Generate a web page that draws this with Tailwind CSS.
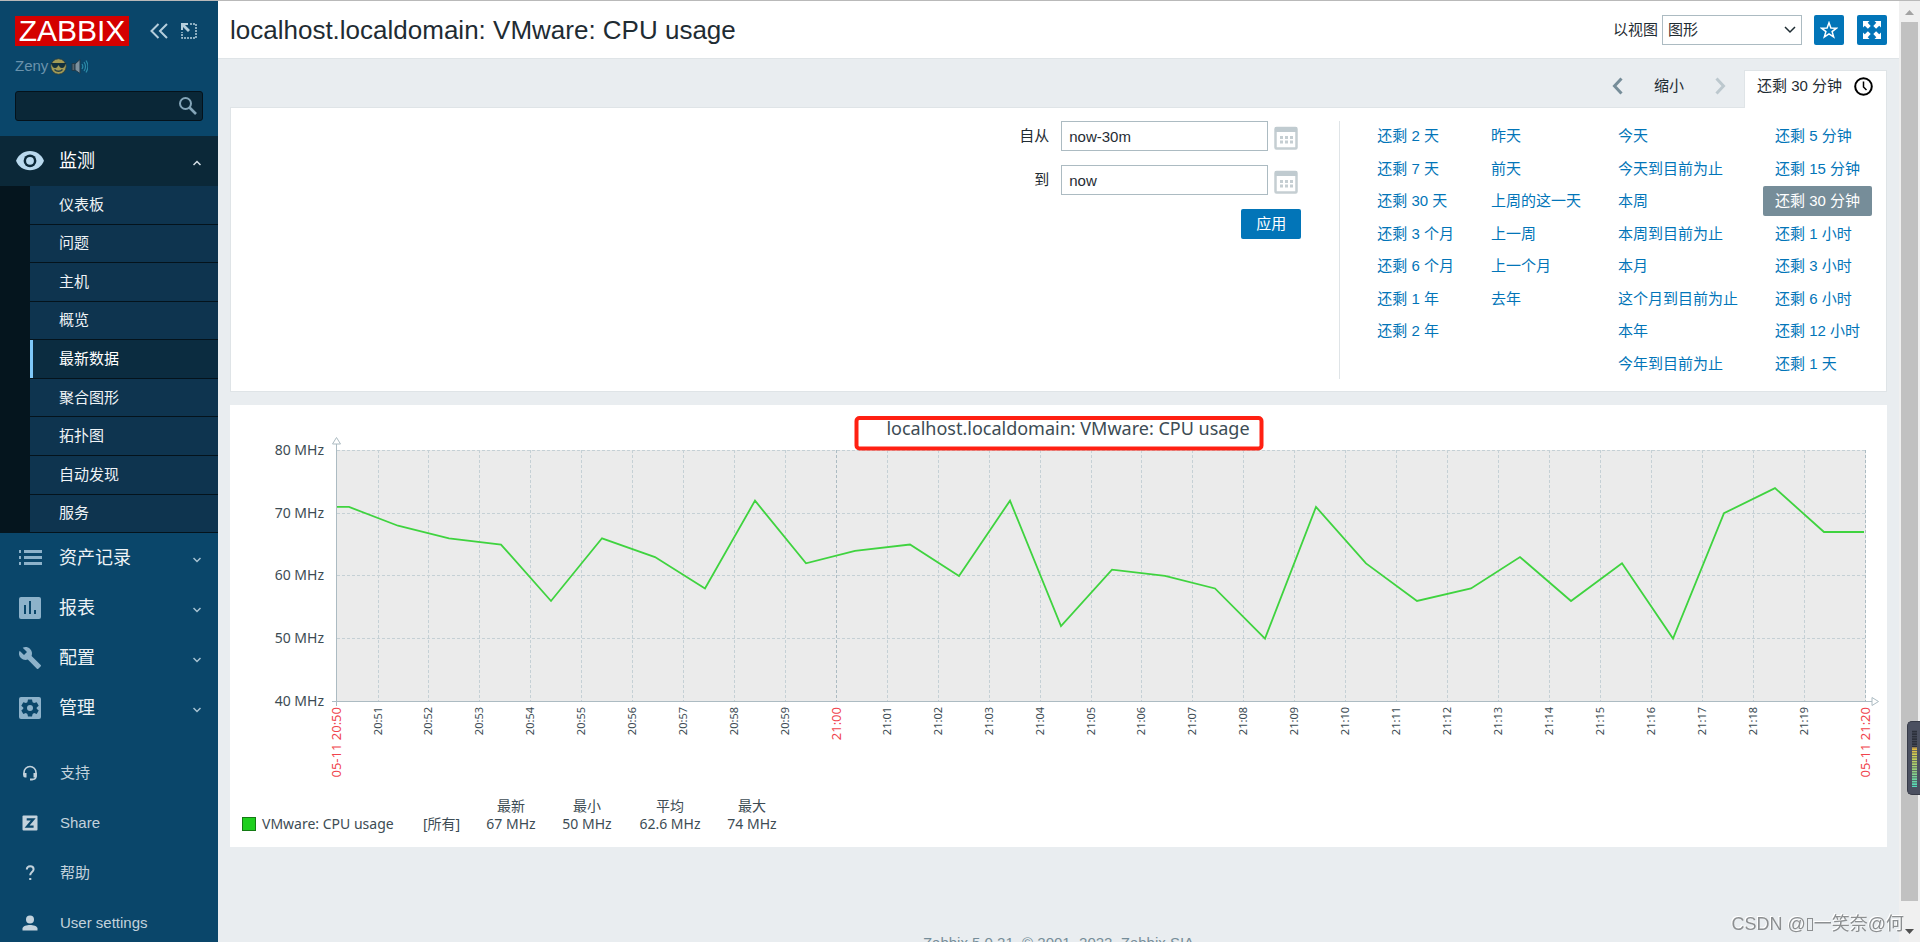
<!DOCTYPE html>
<html lang="zh-CN">
<head>
<meta charset="utf-8">
<title>localhost.localdomain: VMware: CPU usage</title>
<script src="https://cdn.jsdelivr.net/npm/@tailwindcss/browser@4"></script>
</head>
<body class="flex h-screen overflow-hidden border-t border-[#b9b9b9] bg-[#e9edf0] font-['Liberation_Sans','Noto_Sans_CJK_SC',sans-serif] text-[15px] leading-[18px] text-[#1f2c33]">

<aside class="flex w-[218px] shrink-0 flex-col overflow-hidden bg-[#0a466a]">
  <div class="flex h-[135px] shrink-0 flex-col px-[15px] pt-[15px]">
    <div class="flex items-center">
      <a href="#" class="flex h-[30px] w-[114px] items-center justify-center bg-[#d40000] text-[30px] leading-[30px] text-white">ZABBIX</a>
      <button aria-label="折叠侧栏" class="ml-5 text-[#b5cedc]"><svg class="size-5" viewBox="0 0 20 20" fill="none" stroke="currentColor" stroke-width="2"><path d="M9.500 3 2.500 10l7 7M18 3l-7 7 7 7"/></svg></button>
      <button aria-label="隐藏侧栏" class="ml-3 text-[#b5cedc]"><svg class="size-4" viewBox="0 0 16 16" fill="none" stroke="currentColor"><path stroke-width="1.500" stroke-dasharray="2 1" d="M9 1h6v14H1V9"/><path d="M0 0h7v2H4l5 5-2 2-5-5v3H0z" fill="currentColor" stroke="none"/></svg></button>
    </div>
    <div class="mt-[11px] flex items-center text-[#6a93ad]">Zeny
      <svg class="ml-0.5 size-[17px]" viewBox="0 0 17 17"><circle cx="8.500" cy="8.500" r="7.800" fill="#a39b55" stroke="#243f47"/><path d="M1 5h15v1l-1 .5c0 2-1 3.500-3 3.500S9.500 9 9 7.500H8C7.500 9 7 10 5 10S2 8.500 2 6.500L1 6z" fill="#12303d"/><path d="M4.500 11.500c2 2.300 6 2.300 8 0" fill="none" stroke="#243f47" stroke-width="1.300"/></svg>
      <svg class="ml-1 size-[17px]" viewBox="0 0 17 17"><path d="M1 5.500h3v7H1z" fill="#56636b" stroke="#203b4a"/><path d="M4 6l5-4.500v14L4 12z" fill="#7e929f" stroke="#203b4a"/><path d="M11 6c1 1.500 1 3.500 0 5M13 4c2 2.500 2 6.500 0 9M15 2.500c2.200 3.500 2.200 8.500 0 12" fill="none" stroke="#2c8ba8" stroke-width="1.200"/></svg>
    </div>
    <div class="mt-4 flex h-[30px] items-center rounded-[3px] border border-[#04121b] bg-[#0a2737] pr-[5px]">
      <input type="search" aria-label="搜索" class="min-w-0 flex-1 bg-transparent px-2 text-white outline-none">
      <button aria-label="搜索"><svg class="size-[18px]" viewBox="0 0 18 18" fill="none" stroke="#84a5b8"><circle cx="6.500" cy="6.500" r="5.500" stroke-width="2"/><path d="m10.500 10.500 6.500 6.500" stroke-width="2.600"/></svg></button>
    </div>
  </div>

  <nav class="shrink-0 text-[#eef3f6]">
    <a href="#" class="flex h-[50px] items-center bg-[#0b2838] pr-[17px] pl-4 text-lg text-white">
      <svg class="h-5 w-7" viewBox="0 0 28 20"><path d="M14 0C7.500 0 2.200 4 0 9.800c2.200 5.700 7.500 9.500 14 9.500s11.800-3.800 14-9.500C25.800 4 20.500 0 14 0z" fill="#b9d9ee"/><circle cx="14" cy="9.800" r="6.400" fill="#0b2838"/><circle cx="14" cy="9.800" r="3.900" fill="#b9d9ee"/></svg>
      <span class="ml-[15px] flex-1">监测</span>
      <svg class="mt-1 h-[6px] w-2" viewBox="0 0 8 6" fill="none" stroke="#d5dfe6" stroke-width="1.500"><path d="M.5 5 4 1.500 7.500 5"/></svg>
    </a>
    <ul class="flex h-[347px] flex-col bg-[#05151e] pl-[30px] [&>li]:flex [&>li]:flex-1 [&>li]:border-b [&>li]:border-[#04131c] [&_a]:flex [&_a]:flex-1 [&_a]:items-center [&_a]:pl-[29px]">
      <li class="bg-[#0e344f]"><a href="#">仪表板</a></li>
      <li class="bg-[#0e344f]"><a href="#">问题</a></li>
      <li class="bg-[#0e344f]"><a href="#">主机</a></li>
      <li class="bg-[#0e344f]"><a href="#">概览</a></li>
      <li class="bg-[#0b2c40]"><a href="#" class="border-l-3 border-[#7fc8f8] !pl-[26px] text-white">最新数据</a></li>
      <li class="bg-[#0e344f]"><a href="#">聚合图形</a></li>
      <li class="bg-[#0e344f]"><a href="#">拓扑图</a></li>
      <li class="bg-[#0e344f]"><a href="#">自动发现</a></li>
      <li class="bg-[#0e344f]"><a href="#">服务</a></li>
    </ul>
    <a href="#" class="flex h-[50px] items-center pr-[17px] pl-[18px] text-lg">
      <svg class="size-6" viewBox="0 0 24 24" fill="#8db2ca"><path d="M1 4h2v3H1zM1 10h2v3H1zM1 16h2v3H1zM6 4h18v3H6zM6 10h18v3H6zM6 16h18v3H6z"/></svg>
      <span class="ml-[17px] flex-1">资产记录</span>
      <svg class="mt-1 h-[6px] w-2" viewBox="0 0 8 6" fill="none" stroke="#a9c3d3" stroke-width="1.500"><path d="M.5 1 4 4.500 7.500 1"/></svg>
    </a>
    <a href="#" class="flex h-[50px] items-center pr-[17px] pl-[18px] text-lg">
      <svg class="size-6" viewBox="0 0 24 24"><rect x="1" y="1" width="22" height="22" rx="2" fill="#8db2ca"/><path d="M6 9h2v9H6zM11 5h2v13h-2zM16 14h2v4h-2z" fill="#0a466a"/></svg>
      <span class="ml-[17px] flex-1">报表</span>
      <svg class="mt-1 h-[6px] w-2" viewBox="0 0 8 6" fill="none" stroke="#a9c3d3" stroke-width="1.500"><path d="M.5 1 4 4.500 7.500 1"/></svg>
    </a>
    <a href="#" class="flex h-[50px] items-center pr-[17px] pl-[18px] text-lg">
      <svg class="size-6" viewBox="0 0 24 24"><path fill="#8db2ca" d="m22.700 19-9.100-9.100c.9-2.300.4-5-1.500-6.900-2-2-5-2.400-7.400-1.300L9 6 6 9 1.600 4.700C.4 7.100.9 10.100 2.900 12.100c1.900 1.900 4.600 2.400 6.900 1.500l9.100 9.100c.4.4 1 .4 1.400 0l2.300-2.300c.5-.4.5-1.100.1-1.400z"/></svg>
      <span class="ml-[17px] flex-1">配置</span>
      <svg class="mt-1 h-[6px] w-2" viewBox="0 0 8 6" fill="none" stroke="#a9c3d3" stroke-width="1.500"><path d="M.5 1 4 4.500 7.500 1"/></svg>
    </a>
    <a href="#" class="flex h-[50px] items-center pr-[17px] pl-[18px] text-lg">
      <svg class="size-6" viewBox="0 0 24 24"><rect x="1" y="1" width="22" height="22" rx="2" fill="#8db2ca"/><path d="M10 3.500h4l.6 2.700 1.500.9 2.600-.9 2 3.500-2 1.800v1.200l2 1.800-2 3.500-2.600-.9-1.500.9-.6 2.500h-4l-.6-2.500-1.500-.9-2.600.9-2-3.500 2-1.800v-1.200l-2-1.800 2-3.500 2.600.9 1.500-.9z" fill="#0a466a"/><circle cx="12" cy="12" r="3" fill="#8db2ca"/></svg>
      <span class="ml-[17px] flex-1">管理</span>
      <svg class="mt-1 h-[6px] w-2" viewBox="0 0 8 6" fill="none" stroke="#a9c3d3" stroke-width="1.500"><path d="M.5 1 4 4.500 7.500 1"/></svg>
    </a>
  </nav>

  <nav class="mt-[15px] shrink-0 text-[#c3d2dc]">
    <a href="#" class="flex h-[50px] items-center pl-[22px]">
      <svg class="size-4" viewBox="0 0 16 16" fill="none" stroke="currentColor"><path d="M2 10V7.500a6 6 0 0 1 12 0V11c0 2.500-1.500 3.500-4 3.500" stroke-width="1.600"/><path d="M1.200 8h3.300v4.500H3a1.800 1.800 0 0 1-1.800-1.800zM11.500 8h3.300v3a1.800 1.800 0 0 1-1.800 1.500h-1.500zM8 13.500h2.500v2H8z" fill="currentColor" stroke="none"/></svg>
      <span class="ml-[22px]">支持</span>
    </a>
    <a href="#" class="flex h-[50px] items-center pl-[22px]">
      <svg class="size-4" viewBox="0 0 16 16"><rect x=".5" y=".5" width="15" height="15" rx="1" fill="currentColor"/><path d="M4.700 4.300h6.600L5 11.700h6.600" fill="none" stroke="#0a466a" stroke-width="2.200"/></svg>
      <span class="ml-[22px]">Share</span>
    </a>
    <a href="#" class="flex h-[50px] items-center pl-[22px]">
      <svg class="size-4" viewBox="0 0 16 16" fill="none" stroke="currentColor" stroke-width="2"><path d="M4.800 4.500C4.800 2.500 6 1.200 8.200 1.200s3.400 1.200 3.400 3c0 2.800-3.400 3-3.400 6M7.200 14h2.100"/></svg>
      <span class="ml-[22px]">帮助</span>
    </a>
    <a href="#" class="flex h-[50px] items-center pl-[22px]">
      <svg class="size-4" viewBox="0 0 16 16" fill="currentColor"><circle cx="8" cy="4.500" r="4"/><path d="M.5 15.500v-2c0-2.500 4.500-3.500 7.500-3.500s7.500 1 7.500 3.500v2z"/></svg>
      <span class="ml-[22px]">User settings</span>
    </a>
  </nav>
</aside>

<main class="flex min-w-0 flex-1 flex-col overflow-hidden">
  <header class="flex h-[58px] shrink-0 items-center border-b border-[#dfe4e7] bg-white px-3">
    <h1 class="flex-1 text-[26px] leading-8">localhost.localdomain: VMware: CPU usage</h1>
    <label for="view">以视图</label>
    <div class="relative ml-1">
      <select id="view" class="h-[30px] w-[140px] appearance-none border border-[#acbbc2] bg-white pl-[5px]"><option>图形</option></select>
      <svg class="pointer-events-none absolute top-[11px] right-[6px] h-2 w-3" viewBox="0 0 12 8" fill="none" stroke="#1f2c33" stroke-width="1.500"><path d="m1 1 5 5 5-5"/></svg>
    </div>
    <button aria-label="收藏" class="ml-3 flex size-[30px] items-center justify-center rounded-[2px] bg-[#0275b8]"><svg class="size-[18px]" viewBox="0 0 18 18" fill="none" stroke="#fff" stroke-width="1.500"><path d="m9 1.800 1.900 5.200 5.600.2-4.400 3.400 1.600 5.400L9 12.900 4.300 16l1.600-5.400L1.500 7.200 7.100 7z"/></svg></button>
    <button aria-label="全屏" class="ml-[13px] flex size-[30px] items-center justify-center rounded-[2px] bg-[#0275b8]"><svg class="size-[18px]" viewBox="0 0 18 18" fill="#fff"><path id="arrow" d="M0 0h6.500L4.700 1.800 7.700 4.900 4.900 7.700 1.800 4.700 0 6.500z"/><use href="#arrow" transform="rotate(90 9 9)"/><use href="#arrow" transform="rotate(180 9 9)"/><use href="#arrow" transform="rotate(270 9 9)"/></svg></button>
  </header>

  <div class="flex shrink-0 flex-col px-3 pt-[11px]">
    <div class="relative -mb-px flex h-[38px] items-stretch justify-end">
      <div class="flex items-center pb-[7px]">
        <button aria-label="后退"><svg class="h-[18px] w-[11px]" viewBox="0 0 11 18" fill="none" stroke="#768d99" stroke-width="3"><path d="M9.500 1.500 2.500 9l7 7.500"/></svg></button>
        <button class="ml-[31px]">缩小</button>
        <button aria-label="前进" class="mr-[18px] ml-[31px]"><svg class="h-[18px] w-[11px]" viewBox="0 0 11 18" fill="none" stroke="#bcc8ce" stroke-width="3"><path d="m1.500 1.500 7 7.500-7 7.500"/></svg></button>
      </div>
      <a href="#" class="flex items-center border border-b-0 border-[#dfe4e7] bg-white pr-[13px] pb-[7px] pl-3">还剩 30 分钟
        <svg class="ml-3 size-[19px]" viewBox="0 0 19 19" fill="none" stroke="#000" stroke-width="2"><circle cx="9.500" cy="9.500" r="8.300"/><path d="M9.500 4.500v5.500l3 3" stroke-width="1.500"/></svg>
      </a>
    </div>

    <section class="flex justify-end border border-[#dfe4e7] bg-white pt-[13px] pr-[14px] pb-3">
      <form class="grid grid-cols-[auto_207px_auto] content-start items-center gap-y-[14px] pr-[38px]">
        <label for="from" class="pr-3 text-right">自从</label>
        <input id="from" value="now-30m" class="h-[30px] border border-[#acbbc2] px-[7px] outline-none">
        <button type="button" aria-label="日历" class="mt-1 ml-1.5 mr-[3px]"><svg class="size-6" viewBox="0 0 24 24"><rect x="1.500" y="2" width="21" height="20.500" rx="1" fill="#fff" stroke="#c5ced2" stroke-width="2.500"/><path d="M1 1h22v5H1z" fill="#c0cbd0"/><path d="M6 11.500h14M6 16h14" stroke="#c5ced2" stroke-width="3" stroke-dasharray="3 2"/></svg></button>
        <label for="to" class="pr-3 text-right">到</label>
        <input id="to" value="now" class="h-[30px] border border-[#acbbc2] px-[7px] outline-none">
        <button type="button" aria-label="日历" class="mt-1 ml-1.5 mr-[3px]"><svg class="size-6" viewBox="0 0 24 24"><rect x="1.500" y="2" width="21" height="20.500" rx="1" fill="#fff" stroke="#c5ced2" stroke-width="2.500"/><path d="M1 1h22v5H1z" fill="#c0cbd0"/><path d="M6 11.500h14M6 16h14" stroke="#c5ced2" stroke-width="3" stroke-dasharray="3 2"/></svg></button>
        <button type="button" class="col-span-3 h-[30px] w-[60px] justify-self-end rounded-[2px] bg-[#0275b8] text-white">应用</button>
      </form>
      <div class="flex min-h-[258px] gap-[13px] border-l border-[#dfe4e7] pl-[25px] text-[#0275b8] [&_a]:flex [&_a]:h-[30px] [&_a]:items-center [&_a]:rounded-[2px] [&_a]:px-3">
        <ul class="flex flex-col justify-between">
          <li><a href="#">还剩 2 天</a></li><li><a href="#">还剩 7 天</a></li><li><a href="#">还剩 30 天</a></li><li><a href="#">还剩 3 个月</a></li><li><a href="#">还剩 6 个月</a></li><li><a href="#">还剩 1 年</a></li><li><a href="#">还剩 2 年</a></li><li class="h-[30px]"></li>
        </ul>
        <ul class="flex flex-col justify-between">
          <li><a href="#">昨天</a></li><li><a href="#">前天</a></li><li><a href="#">上周的这一天</a></li><li><a href="#">上一周</a></li><li><a href="#">上一个月</a></li><li><a href="#">去年</a></li><li class="h-[30px]"></li><li class="h-[30px]"></li>
        </ul>
        <ul class="flex flex-col justify-between">
          <li><a href="#">今天</a></li><li><a href="#">今天到目前为止</a></li><li><a href="#">本周</a></li><li><a href="#">本周到目前为止</a></li><li><a href="#">本月</a></li><li><a href="#">这个月到目前为止</a></li><li><a href="#">本年</a></li><li><a href="#">今年到目前为止</a></li>
        </ul>
        <ul class="flex flex-col justify-between">
          <li><a href="#">还剩 5 分钟</a></li><li><a href="#">还剩 15 分钟</a></li><li><a href="#" class="bg-[#768d99] text-white">还剩 30 分钟</a></li><li><a href="#">还剩 1 小时</a></li><li><a href="#">还剩 3 小时</a></li><li><a href="#">还剩 6 小时</a></li><li><a href="#">还剩 12 小时</a></li><li><a href="#">还剩 1 天</a></li>
        </ul>
      </div>
    </section>

    <section class="mt-[13px] bg-white pb-[14px] font-['Noto_Sans','Noto_Sans_CJK_SC',sans-serif] text-[#3d4c54]">
      <svg class="block h-auto w-full" viewBox="0 0 1657 392" fill="#3d4c54">
        <rect x="107" y="45" width="1529" height="251" fill="#ebebeb"/>
        <g id="grid" stroke="#c5d0d5" stroke-dasharray="3 2"></g>
        <g stroke="#acbbc2" fill="#fff"><path d="M106.500 39v262M102 296.500h1540"/><path d="m102.500 39 4-6.500 4 6.500zM1642 292.500l6.500 4-6.500 4z"/></g>
        <polyline id="series" fill="none" stroke="#3fd33f" stroke-width="1.800"/>
        <g id="ylabels" font-size="14" text-anchor="end"></g>
        <g id="xlabels" text-anchor="end"></g>
        <text x="838" y="30" font-size="18" text-anchor="middle">localhost.localdomain: VMware: CPU usage</text>
        <rect x="626.500" y="13" width="405" height="30.500" rx="3" fill="none" stroke="#ff2012" stroke-width="4"/>
      </svg>
      <table class="ml-3 table-fixed text-center text-sm leading-[18px]">
        <colgroup><col class="w-[181px]"><col class="w-[50px]"><col class="w-[76px]"><col class="w-[76px]"><col class="w-[90px]"><col class="w-[74px]"></colgroup>
        <thead><tr class="[&>th]:p-0 [&>th]:font-normal"><th></th><th></th><th>最新</th><th>最小</th><th>平均</th><th>最大</th></tr></thead>
        <tbody><tr><td class="text-left"><span class="flex items-center gap-1.5"><i class="size-[14px] border border-[#147a14] bg-[#1ecf1e]"></i>VMware: CPU usage</span></td><td class="text-left">[所有]</td><td>67 MHz</td><td>50 MHz</td><td>62.6 MHz</td><td>74 MHz</td></tr></tbody>
      </table>
    </section>
  </div>
  <footer class="mt-[87px] shrink-0 text-center text-[#768d99]">Zabbix 5.0.21. © 2001–2022, Zabbix SIA</footer>
</main>

<div class="flex w-[21px] shrink-0 flex-col items-center bg-[#f0f0f0]">
  <svg class="mt-[9px] mb-[7px] h-[5px] w-[9px] shrink-0" viewBox="0 0 9 5" fill="#a3a3a3"><path d="M0 5 4.500 0 9 5z"/></svg>
  <div class="w-[17px] flex-1 bg-[#c1c1c1]"></div>
  <svg class="mt-7 mb-[8px] h-[5px] w-[9px] shrink-0" viewBox="0 0 9 5" fill="#505050"><path d="m0 0 4.500 5L9 0z"/></svg>
</div>

<div class="fixed top-[721px] right-0 h-[74px] w-[13px] rounded-l-[5px] border border-r-0 border-[#363a47] bg-[#4b5060] pt-2 pl-1">
  <svg class="h-[57px] w-[5px]" viewBox="0 0 5 57"><defs><linearGradient id="level" x1="0" y1="0" x2="0" y2="1"><stop offset="0" stop-color="#e8b23c"/><stop offset=".2" stop-color="#cfcf50"/><stop offset=".6" stop-color="#92cf80"/><stop offset="1" stop-color="#4fdcbc"/></linearGradient></defs><path d="M0 0h5v17H0z" fill="#2c303b"/><path d="M0 17h5v40H0z" fill="url(#level)"/><path d="M2.500 0v57" stroke="#4b5060" stroke-width="5" stroke-dasharray=".8 1.700"/></svg>
</div>
<div class="fixed right-4 bottom-[6px] flex items-center text-lg leading-6 text-[#8c8f91] [text-shadow:-1px_-1px_0_#fff]">CSDN @<i class="mx-px h-[13px] w-[6px] border border-[#8c8f91]"></i>一笑奈@何</div>

<script>
  const points = [[107,71],[119,71],[168,68],[219,66],[271,65],[321,56],[372,66],[425,63],[475,58],[525,72],[576,62],[625,64],[680,65],[729,60],[780,72],[831,52],[882,61],[935,60],[985,58],[1035,50],[1086,71],[1136,62],[1187,56],[1241,58],[1290,63],[1341,56],[1392,62],[1443,50],[1494,70],[1545,74],[1594,67],[1634,67]];
  const y = v => 45.5 + (80 - v) * 6.27;
  document.getElementById('series').setAttribute('points', points.map(([x, v]) => x + ',' + y(v)).join(' '));

  let grid = '', xl = '', yl = '';
  for (let v = 80; v >= 40; v -= 10) {
    const gy = Math.floor(y(v)) + 0.5;
    if (v > 40) grid += `<path d="M107 ${gy}H1636"/>`;
    yl += `<text x="94" y="${gy + 4.5}">${v} MHz</text>`;
  }
  const tick = (x, text, major) => {
    grid += `<path d="M${x} 45V296"${major ? ' stroke="#acbbc2"' : ''}/>`;
    xl += `<text transform="translate(${x + (major ? 4 : 3)} 302) rotate(-90)" font-size="${major ? 13 : 11}"${major ? ' fill="#f0444c"' : ''}>${text}</text>`;
  };
  tick(106.5, '05-11 20:50', true);
  for (let m = 51; m < 80; m++) {
    const text = m < 60 ? '20:' + m : '21:' + String(m - 60).padStart(2, '0');
    tick(Math.floor(148 + (m - 51) * 50.93) + 0.5, text, m === 60);
  }
  tick(1635.5, '05-11 21:20', true);
  document.getElementById('grid').innerHTML = grid;
  document.getElementById('xlabels').innerHTML = xl;
  document.getElementById('ylabels').innerHTML = yl;
</script>
</body>
</html>
